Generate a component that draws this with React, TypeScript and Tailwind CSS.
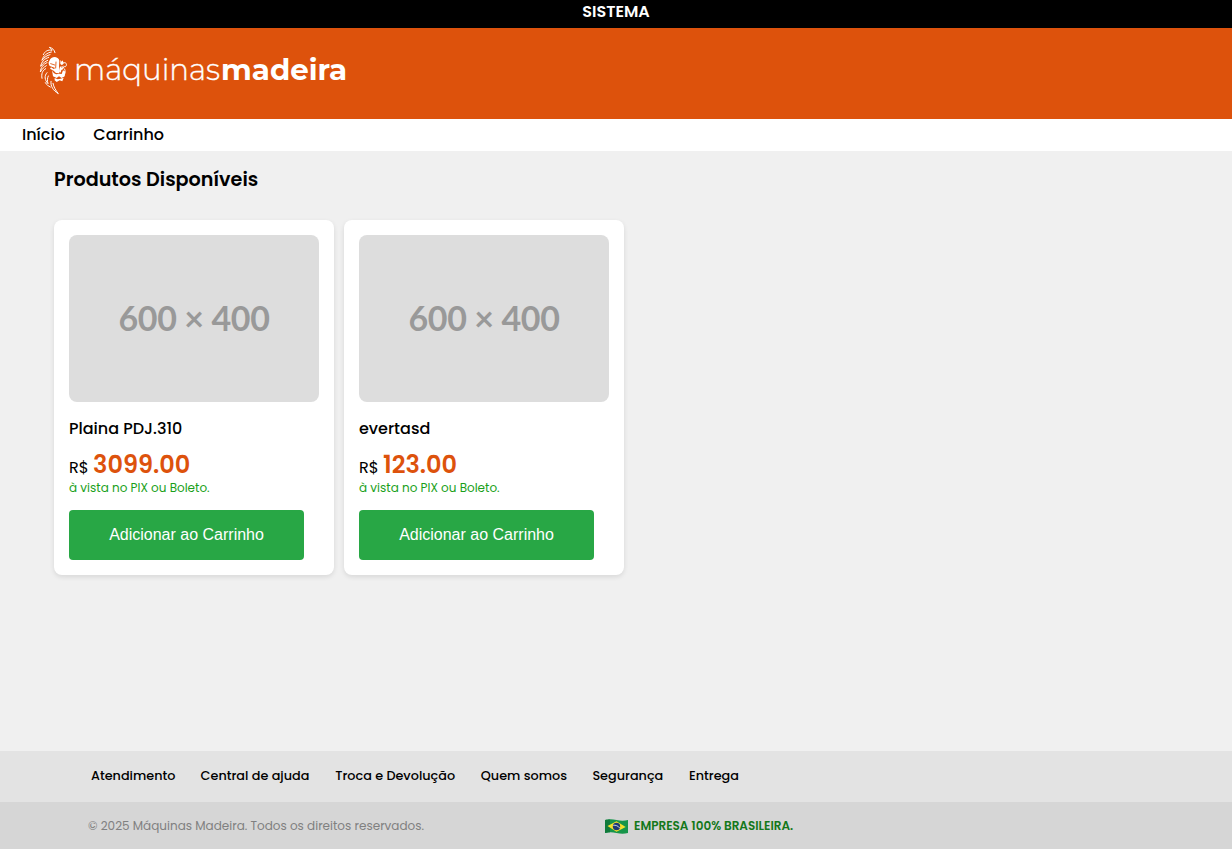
type Product = { name: string; price: string };

const products: Product[] = [
  { name: "Plaina PDJ.310", price: "3099.00" },
  { name: "evertasd", price: "123.00" },
];

const footerLinks = [
  { label: "Atendimento", className: "w-[84px]" },
  { label: "Central de ajuda", className: "w-[109px]" },
  { label: "Troca e Devolução", className: "w-[120px]" },
  { label: "Quem somos", className: "w-[86px]" },
  { label: "Segurança", className: "w-[71px]" },
  { label: "Entrega", className: "w-[50px]" },
];

function Lion() {
  return (
    <svg viewBox="24 18 93 147" className="h-[49px] w-[31px] shrink-0" fill="none" stroke="#fff" strokeLinecap="round" strokeLinejoin="round">
      <g strokeWidth="3">
        <path d="M75 38C73 29 67 24 58 22C62 25 65 28 66 31C54 28 44 34 40 44" />
        <path d="M64 36C51 38 39 48 36 61C44 51 51 46 60 44" />
        <path d="M56 52C43 56 34 66 32 79C39 69 46 64 53 61" />
        <path d="M51 68C40 72 32 83 31 96C36 87 42 81 49 77" />
        <path d="M47 86C38 91 33 101 36 115" />
        <path d="M51 98C42 108 44 120 54 131C51 121 52 114 55 108" />
        <path d="M63 124C61 139 70 152 85 161C77 151 71 141 69 130" />
        <path d="M46 128C49 134 55 138 61 141" />
        <path d="M98 70C104 65 111 69 109 76C108 80 105 82 102 79" />
        <path d="M104 87C107 94 105 102 101 110" />
      </g>
      <g fill="#fff" stroke="none">
        <path d="M58 63C60 55 67 51 75 51C82 52 87 56 88 62L87 81L90 94L87 100L78 99L71 92L60 86L63 82L71 87L76 84L59 78C55 72 55 67 58 63Z" />
        <path d="M91 60L95 65L98 61L101 70L96 76L91 72Z" />
        <path d="M90 78L103 80L99 88L94 90L92 98L88 94Z" />
        <path d="M66 91C69 98 73 102 79 103L87 101L95 102L99 91L106 95L103 109L95 114L87 109L80 114L69 109Z" />
        <path d="M74 114L83 118L92 116L101 113L97 124L89 121L80 126L74 121Z" />
      </g>
      <path d="M62 71L74 75M78 66L77 84M91 78L96 82" stroke="#dd520c" strokeWidth="2.6" />
    </svg>
  );
}

function BrazilFlag() {
  return (
    <svg viewBox="0 0 23 15" className="mt-px h-[15px] w-[23px] shrink-0">
      <path d="M0 1C4 0 7 0 11.500 1C16 2 19 2 23 1V14C19 15 16 15 11.500 14C7 13 4 13 0 14Z" fill="#17954a" />
      <path d="M0 1C2 .5 4 .3 5 .4V13.300C4 13.200 2 13.500 0 14Z" fill="#107a3b" />
      <path d="M2.500 7L11.500 2.300L20.700 8L11.500 12.800Z" fill="#f4e02c" />
      <circle cx="11.500" cy="7.500" r="3.700" fill="#203a73" />
      <path d="M8.200 6.300C10.500 5.900 13.200 6.900 14.700 9" stroke="#d7e2eb" strokeWidth=".9" fill="none" />
    </svg>
  );
}

function ProductCard({ product }: { product: Product }) {
  return (
    <article className="h-[355px] w-[280px] rounded-lg bg-white p-[15px] shadow-[0_2px_5px_rgba(0,0,0,0.1)]">
      <div className="flex h-[167px] w-[250px] items-center justify-center rounded-lg bg-[#ddd] pb-0.5 font-['Lato'] text-[34px] leading-none font-bold tracking-[-0.4px] text-[#999]">
        600 × 400
      </div>
      <h3 className="mt-[15px] text-base leading-6 font-medium whitespace-nowrap">{product.name}</h3>
      <p className="mt-[6px] flex h-9 items-baseline leading-9">
        <span className="w-6 text-base leading-9">R$</span>
        <span className="text-2xl leading-9 font-semibold text-[#dd520c]">{product.price}</span>
      </p>
      <p className="-mt-[4px] text-xs leading-[18px] text-[#1a9f1a]">à vista no PIX ou Boleto.</p>
      <button className="mt-[13px] h-[50px] w-[235px] rounded bg-[#28a745] font-['Liberation_Sans'] text-base text-white">
        Adicionar ao Carrinho
      </button>
    </article>
  );
}

export default function App() {
  return (
    <div className="flex h-[849px] flex-col overflow-hidden bg-[#f0f0f0] font-['Poppins','Inter',sans-serif] text-black">
      <div className="h-7 bg-black text-center text-base leading-[23px] font-semibold text-white">SISTEMA</div>
      <header className="flex h-[91px] items-start bg-[#dd520c] pt-[18px] pl-[38px] text-white">
        <Lion />
        <div className="ml-[5px] flex font-['Montserrat','Inter',sans-serif] text-[29.3px] leading-[48px]">
          <span className="w-[147px]">
            <span className="font-light [-webkit-text-stroke:0.35px_#fff]">máquinas</span>
          </span>
          <span className="font-bold">madeira</span>
        </div>
      </header>
      <nav className="flex h-8 bg-white pl-[22px] text-base leading-[31px] font-medium">
        <a className="w-[71.3px]">Início</a>
        <a>Carrinho</a>
      </nav>
      <main className="h-[600px] pl-[54px]">
        <h2 className="pt-[14px] text-[19.2px] leading-[30px] font-semibold">Produtos Disponíveis</h2>
        <div className="mt-[25px] flex gap-[10px]">
          {products.map((product) => (
            <ProductCard key={product.name} product={product} />
          ))}
        </div>
      </main>
      <footer>
        <div className="flex h-[51px] gap-[25.6px] bg-[#e3e3e3] pl-[91px] text-[12.8px] leading-[49px] font-medium whitespace-nowrap">
          {footerLinks.map((link) => (
            <a key={link.label} className={link.className}>{link.label}</a>
          ))}
        </div>
        <div className="flex h-[47px] items-center bg-[#d6d6d6] pl-[88px] text-xs">
          <p className="w-[517px] text-[#808080]">© 2025 Máquinas Madeira. Todos os direitos reservados.</p>
          <BrazilFlag />
          <p className="ml-1.5 font-semibold text-[#14781b]">EMPRESA 100% BRASILEIRA.</p>
        </div>
      </footer>
    </div>
  );
}
